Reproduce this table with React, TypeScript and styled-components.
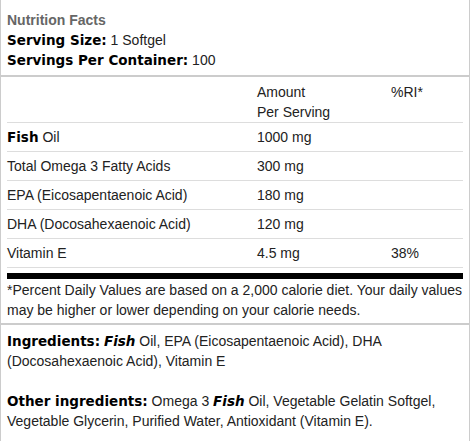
import React from "react";
import styled, { createGlobalStyle } from "styled-components";

const Global = createGlobalStyle`
  html, body { margin: 0; padding: 0; background: #fff; }
  body {
    font-family: "Liberation Sans", Arial, Helvetica, sans-serif;
    font-size: 14px;
    line-height: 20px;
    color: #222;
  }
`;

const Panel = styled.div`
  width: 470px;
  box-sizing: border-box;
  border-left: 1px solid #ccc;
  border-right: 1px solid #ccc;
  padding-bottom: 20px;
`;

const Head = styled.div`
  padding: 10px 6px 5px;
  border-bottom: 2px solid #ccc;
`;

const Title = styled.div`
  font-weight: bold;
  color: #666;
`;

const Line = styled.div`
  color: #222;
`;

const Strong = styled.b`
  font-family: "DejaVu Sans", "Liberation Sans", sans-serif;
  font-size: 13.5px;
  line-height: 1;
  font-weight: bold;
  color: #000;
`;

const Em = styled(Strong)`
  font-style: italic;
`;

const Body = styled.div`
  padding: 0 6px;
`;

const Table = styled.table`
  width: 100%;
  border-collapse: collapse;
  table-layout: fixed;
`;

const Th = styled.th<{ $w?: number }>`
  font-weight: normal;
  text-align: left;
  vertical-align: top;
  padding: 5px 0 0;
  border-bottom: 1px solid #ddd;
  width: ${(p) => (p.$w ? `${p.$w}px` : "auto")};
`;

const Td = styled.td`
  padding: 4px 0;
  border-bottom: 1px solid #ddd;
  white-space: nowrap;
`;

const BlackBar = styled.div`
  height: 6px;
  background: #000;
  margin-top: 5px;
`;

const Footnote = styled.div`
  padding: 1px 0 3px;
`;

const Ingredients = styled.div`
  border-top: 2px solid #ccc;
  padding: 6px 6px 0;
`;

const Para = styled.p`
  margin: 0 0 20px;
`;

const rows: { name: React.ReactNode; amount: string; ri: string }[] = [
  { name: <><Strong>Fish</Strong> Oil</>, amount: "1000 mg", ri: "" },
  { name: "Total Omega 3 Fatty Acids", amount: "300 mg", ri: "" },
  { name: "EPA (Eicosapentaenoic Acid)", amount: "180 mg", ri: "" },
  { name: "DHA (Docosahexaenoic Acid)", amount: "120 mg", ri: "" },
  { name: "Vitamin E", amount: "4.5 mg", ri: "38%" },
];

export default function App() {
  return (
    <>
      <Global />
      <Panel>
        <Head>
          <Title>Nutrition Facts</Title>
          <Line>
            <Strong>Serving Size:</Strong> 1 Softgel
          </Line>
          <Line>
            <Strong>Servings Per Container:</Strong> 100
          </Line>
        </Head>
        <Body>
          <Table>
            <thead>
              <tr>
                <Th $w={250}></Th>
                <Th $w={134}>
                  Amount
                  <br />
                  Per Serving
                </Th>
                <Th>%RI*</Th>
              </tr>
            </thead>
            <tbody>
              {rows.map((r, i) => (
                <tr key={i}>
                  <Td>{r.name}</Td>
                  <Td>{r.amount}</Td>
                  <Td>{r.ri}</Td>
                </tr>
              ))}
            </tbody>
          </Table>
          <BlackBar />
          <Footnote>
            *Percent Daily Values are based on a 2,000 calorie diet. Your daily values may be higher or
            lower depending on your calorie needs.
          </Footnote>
        </Body>
        <Ingredients>
          <Para>
            <Strong>Ingredients:</Strong> <Em>Fish</Em> Oil, EPA (Eicosapentaenoic Acid), DHA
            (Docosahexaenoic Acid), Vitamin E
          </Para>
          <Para>
            <Strong>Other ingredients:</Strong> Omega 3 <Em>Fish</Em> Oil, Vegetable Gelatin Softgel,
            Vegetable Glycerin, Purified Water, Antioxidant (Vitamin E).
          </Para>
        </Ingredients>
      </Panel>
    </>
  );
}
